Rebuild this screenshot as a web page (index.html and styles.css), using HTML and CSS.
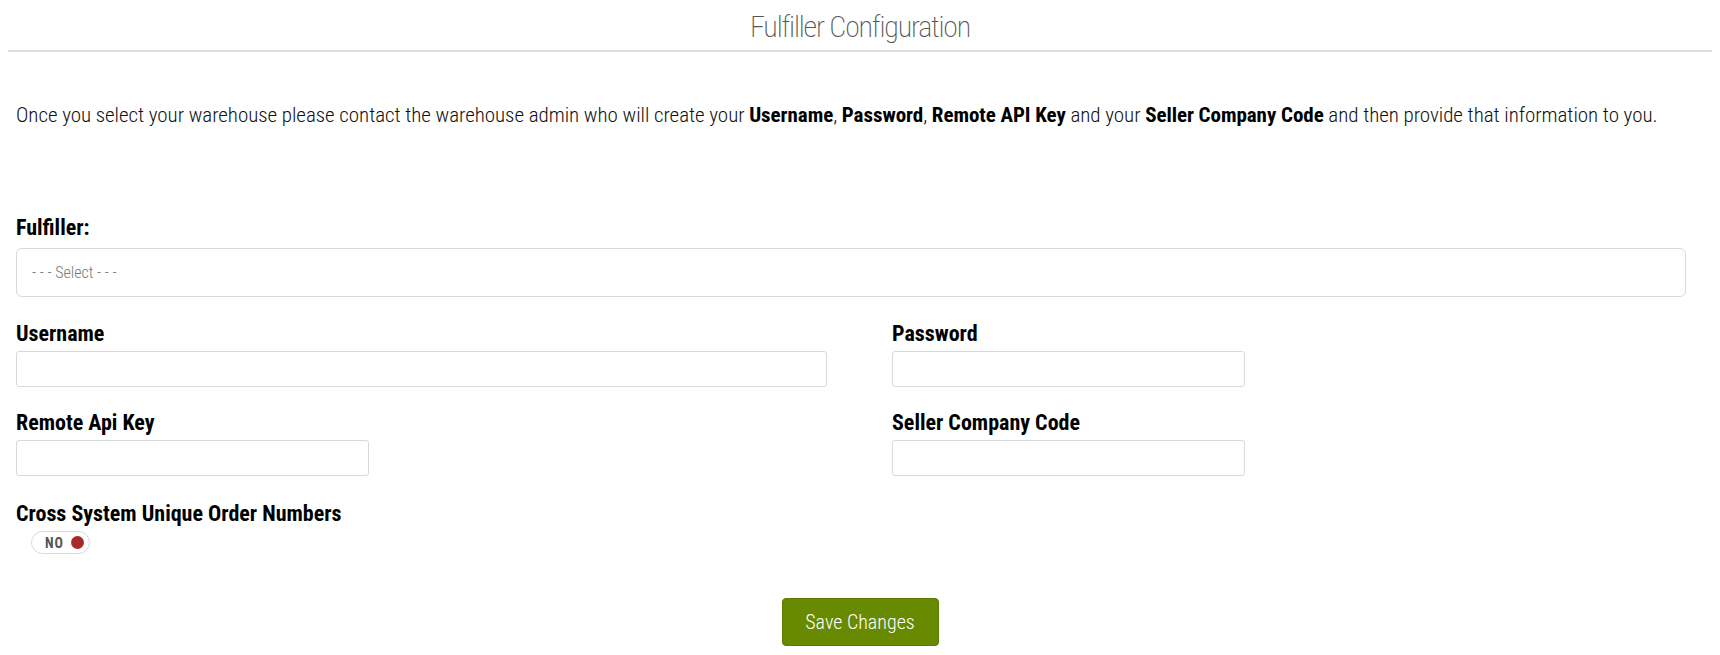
FILE: index.html
```html
<!DOCTYPE html>
<html>
<head>
<meta charset="utf-8">
<link rel="stylesheet" href="styles.css">
</head>
<body>
<header class="page-head">
  <h1 class="title">Fulfiller Configuration</h1>
</header>
<main class="content">
  <p class="intro">Once you select your warehouse please contact the warehouse admin who will create your <b>Username</b>, <b>Password</b>, <b>Remote API Key</b> and your <b>Seller Company Code</b> and then provide that information to you.</p>

  <form class="form">
    <div class="field field-full">
      <label class="label label-main">Fulfiller:</label>
      <div class="select">- - - Select - - -</div>
    </div>

    <div class="grid">
      <div class="field">
        <label class="label">Username</label>
        <div class="input input-wide"></div>
      </div>
      <div class="field">
        <label class="label">Password</label>
        <div class="input input-short"></div>
      </div>
      <div class="field">
        <label class="label">Remote Api Key</label>
        <div class="input input-short"></div>
      </div>
      <div class="field">
        <label class="label">Seller Company Code</label>
        <div class="input input-short"></div>
      </div>
    </div>

    <div class="field">
      <label class="label label-toggle">Cross System Unique Order Numbers</label>
      <div class="toggle"><span class="toggle-text">NO</span><span class="toggle-dot"></span></div>
    </div>

    <div class="actions">
      <button type="button" class="btn-save">Save Changes</button>
    </div>
  </form>
</main>
</body>
</html>
```

FILE: styles.css
```css
html, body {
  margin: 0;
  padding: 0;
  background: #fff;
}
body {
  padding: 0 8px;
  font-family: "Roboto Condensed", Roboto, "Liberation Sans", sans-serif;
  font-stretch: condensed;
  color: #111;
}
.page-head {
  border-bottom: 2px solid #dedede;
  height: 50px;
  text-align: center;
}
.title {
  margin: 0;
  padding-top: 7px;
  font-size: 30px;
  line-height: 40px;
  font-weight: 200;
  letter-spacing: -1.2px;
  color: #555;
}
.content {
  padding: 0 26px 0 8px;
}
.intro {
  margin: 50px 0 0 0;
  font-size: 21px;
  line-height: 26px;
  font-weight: 300;
  letter-spacing: -0.05px;
  color: #111;
}
.intro b {
  font-weight: 700;
  color: #000;
}
.form {
  margin-top: 89px;
}
.field {
  display: flex;
  flex-direction: column;
  align-items: flex-start;
}
.field-full {
  align-items: stretch;
}
.label {
  display: block;
  font-size: 22px;
  line-height: 22px;
  font-weight: 700;
  color: #000;
  margin-bottom: 6px;
}
.label-main {
  margin-bottom: 9px;
}
.select {
  height: 47px;
  border: 1px solid #d6d9de;
  border-radius: 6px;
  padding: 0 15px;
  display: flex;
  align-items: center;
  font-size: 16px;
  font-weight: 300;
  color: #777;
}
.grid {
  display: grid;
  grid-template-columns: 876px 1fr;
  row-gap: 25px;
  margin-top: 26px;
}
.input {
  height: 34px;
  border: 1px solid #d6d9de;
  border-radius: 3px;
  background: #fff;
}
.input-wide {
  width: 809px;
}
.input-short {
  width: 351px;
}
.grid + .field {
  margin-top: 27px;
}
.label-toggle {
  margin-bottom: 6px;
}
.toggle {
  margin-left: 15px;
  width: 59px;
  height: 23px;
  border: 1px solid #d6d9de;
  border-radius: 12px;
  display: flex;
  align-items: center;
  justify-content: flex-end;
  gap: 7px;
  padding-right: 5px;
  box-sizing: border-box;
}
.toggle-text {
  font-size: 14px;
  font-weight: 700;
  color: #555;
  letter-spacing: 1px;
}
.toggle-dot {
  width: 13px;
  height: 13px;
  border-radius: 50%;
  background: #a62a2a;
}
.actions {
  display: flex;
  justify-content: center;
  margin-top: 44px;
  padding-left: 18px;
}
.btn-save {
  width: 157px;
  height: 48px;
  background: #678a00;
  border: 1px solid #5a7a00;
  border-radius: 4px;
  color: #fff;
  font-family: inherit;
  font-stretch: condensed;
  font-size: 20px;
  font-weight: 300;
  cursor: pointer;
}
```
